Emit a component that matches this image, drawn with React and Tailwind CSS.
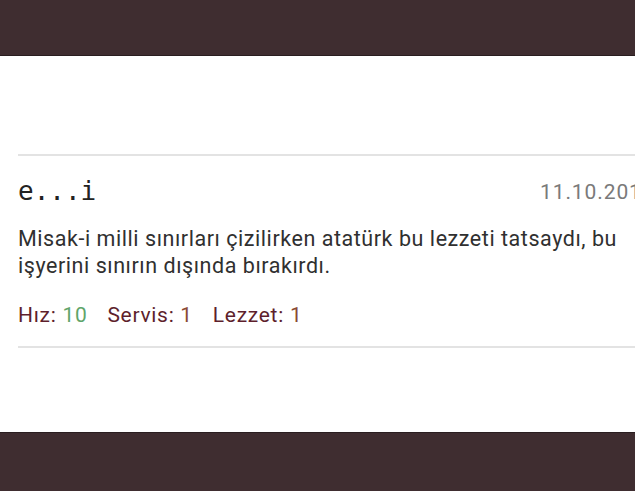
export default function App() {
  return (
    <div className="w-[635px] h-[491px] overflow-hidden bg-white flex flex-col font-['Roboto','Liberation_Sans',sans-serif]">
      <div className="h-[56px] bg-[#3f2d30] border-b border-[#2a1e20] shrink-0" />
      <div className="flex-1 pt-[98px] pl-[18px] overflow-hidden">
        <div className="w-[700px] border-t-2 border-[#e3e3e3]">
          <div className="flex items-end pt-[20px]">
            <span className="w-[522px] font-['DejaVu_Sans_Mono',monospace] text-[26px] leading-[30px] text-[#222]">
              e...i
            </span>
            <span className="text-[21px] leading-[26px] tracking-[0.9px] text-[#7a7a7a] whitespace-nowrap pb-[1px]">
              11.10.2017
            </span>
          </div>
          <p className="mt-[19px] w-[615px] text-[21.5px] leading-[27px] tracking-[0.55px] text-[#303030]">
            Misak-i milli sınırları çizilirken atatürk bu lezzeti tatsaydı, bu
            işyerini sınırın dışında bırakırdı.
          </p>
          <div className="mt-[24px] text-[21px] leading-[24px] tracking-[0.7px] flex gap-[20px]">
            <span>
              <span className="text-[#5e1f2c]">Hız: </span>
              <span className="text-[#5fa56a]">10</span>
            </span>
            <span>
              <span className="text-[#5e1f2c]">Servis: </span>
              <span className="text-[#8a4a34]">1</span>
            </span>
            <span>
              <span className="text-[#5e1f2c]">Lezzet: </span>
              <span className="text-[#8a4a34]">1</span>
            </span>
          </div>
          <div className="mt-[19px] border-t-2 border-[#e3e3e3]" />
        </div>
      </div>
      <div className="h-[59px] bg-[#3f2d30] border-t border-[#2a1e20] shrink-0" />
    </div>
  );
}
